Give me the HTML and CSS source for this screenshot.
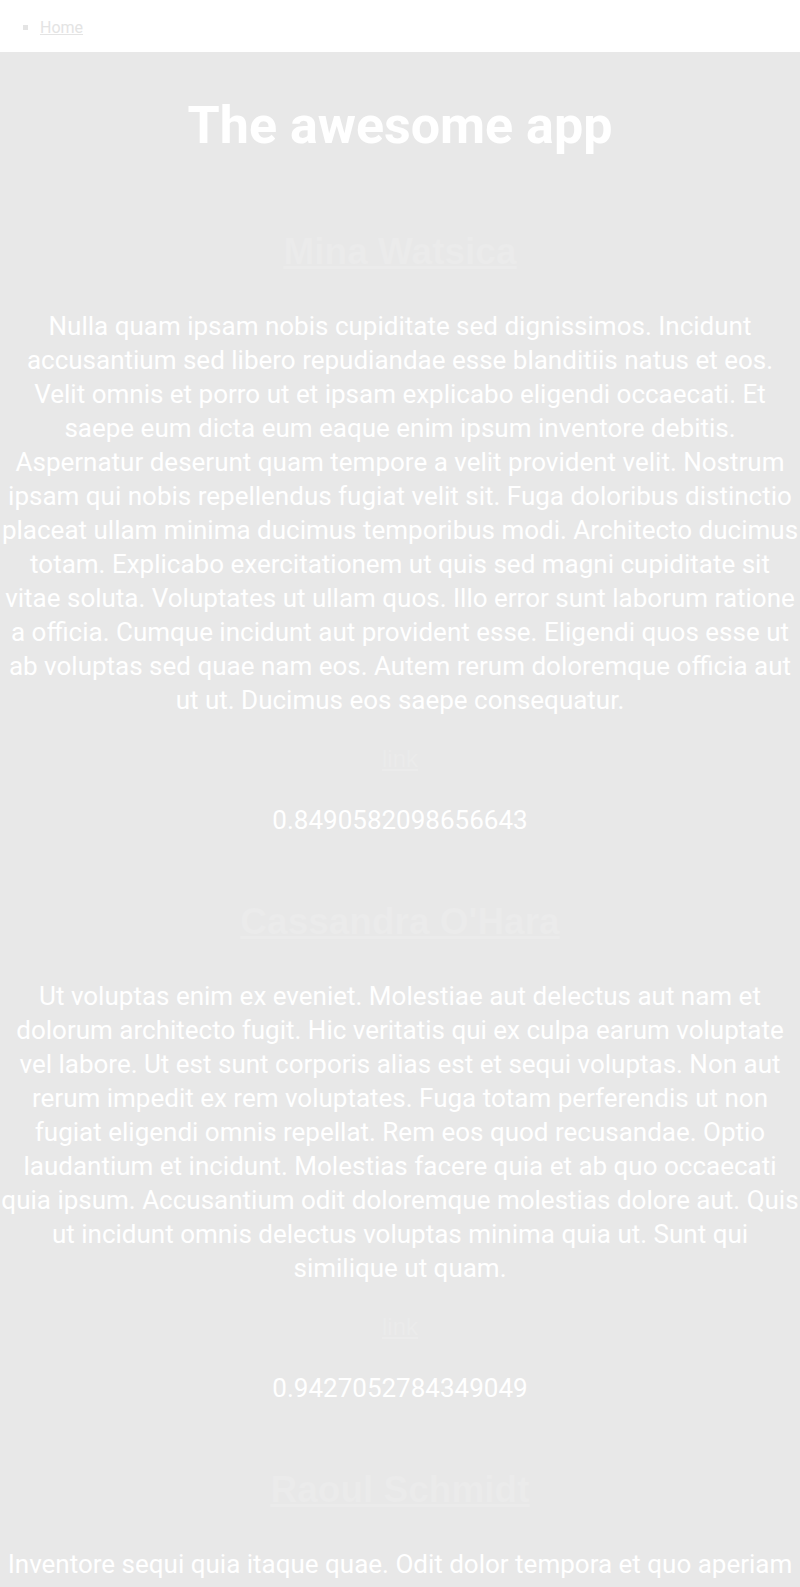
FILE: index.html
```html
<!DOCTYPE html>
<html lang="en">
<head>
<meta charset="utf-8">
<title>The awesome app</title>
<link rel="stylesheet" href="styles.css">
</head>
<body>
<nav class="nav">
  <ul class="nav-list">
    <li class="nav-item"><a class="nav-link" href="#">Home</a></li>
  </ul>
</nav>
<main class="main">
  <h1 class="title">The awesome app</h1>

  <article class="person">
    <h2 class="person-name"><a class="person-link" href="#">Mina Watsica</a></h2>
    <p class="person-bio">Nulla quam ipsam nobis cupiditate sed dignissimos. Incidunt accusantium sed libero repudiandae esse blanditiis natus et eos. Velit omnis et porro ut et ipsam explicabo eligendi occaecati. Et saepe eum dicta eum eaque enim ipsum inventore debitis. Aspernatur deserunt quam tempore a velit provident velit. Nostrum ipsam qui nobis repellendus fugiat velit sit. Fuga doloribus distinctio placeat ullam minima ducimus temporibus modi. Architecto ducimus totam. Explicabo exercitationem ut quis sed magni cupiditate sit vitae soluta. Voluptates ut ullam quos. Illo error sunt laborum ratione a officia. Cumque incidunt aut provident esse. Eligendi quos esse ut ab voluptas sed quae nam eos. Autem rerum doloremque officia aut ut ut. Ducimus eos saepe consequatur.</p>
    <a class="more" href="#">link</a>
    <p class="score">0.8490582098656643</p>
  </article>

  <article class="person">
    <h2 class="person-name"><a class="person-link" href="#">Cassandra O'Hara</a></h2>
    <p class="person-bio">Ut voluptas enim ex eveniet. Molestiae aut delectus aut nam et dolorum architecto fugit. Hic veritatis qui ex culpa earum voluptate vel labore. Ut est sunt corporis alias est et sequi voluptas. Non aut rerum impedit ex rem voluptates. Fuga totam perferendis ut non fugiat eligendi omnis repellat. Rem eos quod recusandae. Optio laudantium et incidunt. Molestias facere quia et ab quo occaecati quia ipsum. Accusantium odit doloremque molestias dolore aut. Quis ut incidunt omnis delectus voluptas minima quia ut. Sunt qui similique ut quam.</p>
    <a class="more" href="#">link</a>
    <p class="score">0.9427052784349049</p>
  </article>

  <article class="person">
    <h2 class="person-name"><a class="person-link" href="#">Raoul Schmidt</a></h2>
    <p class="person-bio">Inventore sequi quia itaque quae. Odit dolor tempora et quo aperiam voluptatem. Sint et ut et. Quia dolorem et sed voluptatem.</p>
    <a class="more" href="#">link</a>
    <p class="score">0.5123876540912345</p>
  </article>
</main>
</body>
</html>
```

FILE: styles.css
```css
html, body {
  margin: 0;
  padding: 0;
}

body {
  font-family: Roboto, "Liberation Sans", sans-serif;
  background: #e8e8e8;
  color: #ffffff;
}

.nav {
  background: #ffffff;
}

.nav-list {
  margin: 0;
  padding: 18px 0 14px 40px;
  list-style: square;
  color: #e4e4e4;
}

.nav-item {
  font-size: 16px;
  line-height: 20px;
}

.nav-link {
  color: #e4e4e4;
  text-decoration: underline;
}

.main {
  text-align: center;
  padding: 43px 0 40px;
}

.title {
  margin: 0;
  font-size: 52px;
  font-weight: 700;
  line-height: normal;
  color: #ffffff;
}

.person {
  display: flex;
  flex-direction: column;
  align-items: center;
}

.person-name {
  margin: 75px 0 0;
  font-family: "Liberation Sans", Arial, sans-serif;
  font-size: 37px;
  font-weight: 700;
  line-height: normal;
}

.person + .person .person-name {
  margin-top: 64px;
}

.person-link {
  color: #ebebeb;
  text-decoration: underline;
}

.person-bio {
  margin: 36px 0 0;
  font-size: 26px;
  line-height: 34px;
  color: #ffffff;
}

.more {
  margin-top: 28px;
  font-family: "Liberation Sans", Arial, sans-serif;
  font-size: 24px;
  line-height: normal;
  color: #ebebeb;
  text-decoration: underline;
}

.score {
  margin: 30px 0 0;
  font-size: 26px;
  line-height: 34px;
  color: #ffffff;
}
```
